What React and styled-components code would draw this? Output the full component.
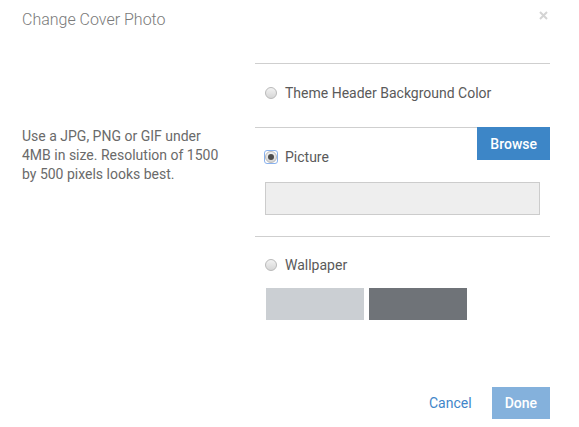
import React from "react";
import styled, { createGlobalStyle } from "styled-components";

const GlobalStyle = createGlobalStyle`
  body {
    margin: 0;
    background: #fff;
    font-family: Roboto, "Liberation Sans", sans-serif;
  }
`;

const Dialog = styled.div`
  width: 579px;
  height: 427px;
  box-sizing: border-box;
  padding: 0 29px 0 22px;
  background: #fff;
`;

const Header = styled.div`
  display: flex;
  justify-content: space-between;
  align-items: flex-start;
  height: 63px;
`;

const Title = styled.h1`
  margin: 10px 0 0;
  font-family: "Roboto Light", Roboto, "Liberation Sans", sans-serif;
  font-size: 16px;
  line-height: 20px;
  font-weight: 300;
  color: #7a7a7a;
`;

const Close = styled.button`
  margin: 11px 2px 0 0;
  padding: 0;
  border: 0;
  background: none;
  width: 9px;
  height: 9px;
  display: flex;
  cursor: pointer;
`;

const Body = styled.div`
  display: grid;
  grid-template-columns: 233px 1fr;
`;

const Hint = styled.p`
  margin: 0;
  padding-top: 64px;
  font-size: 14px;
  line-height: 19px;
  color: #6a6a6a;
  width: 210px;
`;

const Options = styled.div`
  display: flex;
  flex-direction: column;
`;

const Section = styled.div`
  border-top: 1px solid #cfcfcf;
  padding: ${(p) => p.$pad || "0"};
  padding-left: 10px;
  box-sizing: border-box;
  height: ${(p) => p.$height || "auto"};
`;

const TopRow = styled.div`
  display: flex;
  justify-content: space-between;
  align-items: flex-start;
`;

const Label = styled.label`
  display: flex;
  align-items: center;
  gap: 7px;
  height: 16px;
  margin-top: ${(p) => p.$top || "0"};
  font-size: 14px;
  color: #5a5a5a;
  cursor: pointer;
`;

const RadioWrap = styled.span`
  width: 14px;
  height: 14px;
  box-sizing: border-box;
  display: flex;
  align-items: center;
  justify-content: center;
  margin-left: -1px;
  border-radius: 3px;
  border: 1px solid ${(p) => (p.$focused ? "#8ab2ee" : "transparent")};
`;

const RadioDot = styled.span`
  width: 12px;
  height: 12px;
  box-sizing: border-box;
  border-radius: 50%;
  border: 1px solid #b9b9b9;
  background: linear-gradient(#f2f2f2, #d6d6d6);
  display: flex;
  align-items: center;
  justify-content: center;
  &::after {
    content: "";
    width: 6px;
    height: 6px;
    border-radius: 50%;
    background: #4d4d4d;
    display: ${(p) => (p.$checked ? "block" : "none")};
  }
`;

const Button = styled.button`
  border: 0;
  height: ${(p) => p.$h || "33px"};
  padding: 0 ${(p) => p.$px || "13px"};
  background: ${(p) => (p.$muted ? "#84b1dc" : "#3d86c7")};
  color: #fff;
  font-family: Roboto, "Liberation Sans", sans-serif;
  font-size: 14px;
  font-weight: 500;
  cursor: pointer;
  margin-top: ${(p) => p.$mt || "0"};
`;

const FileField = styled.div`
  margin-top: 17px;
  width: 275px;
  height: 33px;
  box-sizing: border-box;
  background: #eeeeee;
  border: 1px solid #cccccc;
`;

const Swatches = styled.div`
  display: flex;
  gap: 5px;
  margin: 15px 0 0 1px;
`;

const Swatch = styled.div`
  width: 98px;
  height: 32px;
  background: ${(p) => p.$color};
`;

const Footer = styled.div`
  display: flex;
  justify-content: flex-end;
  align-items: center;
  gap: 20px;
  margin-top: 67px;
`;

const LinkButton = styled.button`
  border: 0;
  padding: 0;
  background: none;
  font-family: Roboto, "Liberation Sans", sans-serif;
  font-size: 14px;
  color: #3f86c9;
  cursor: pointer;
`;

const Radio = ({ checked, focused }) => (
  <RadioWrap $focused={focused}>
    <RadioDot $checked={checked} />
  </RadioWrap>
);

export default function App() {
  return (
    <Dialog>
      <GlobalStyle />
      <Header>
        <Title>Change Cover Photo</Title>
        <Close aria-label="Close">
          <svg width="9" height="9" viewBox="0 0 9 9">
            <path d="M1 1L8 8M8 1L1 8" stroke="#d4d4d4" strokeWidth="2" />
          </svg>
        </Close>
      </Header>
      <Body>
        <Hint>
          Use a JPG, PNG or GIF under 4MB in size. Resolution of 1500 by 500
          pixels looks best.
        </Hint>
        <Options>
          <Section $height="64px" $pad="21px 0 0">
            <Label>
              <Radio />
              Theme Header Background Color
            </Label>
          </Section>
          <Section $pad="0 0 21px">
            <TopRow>
              <Label $top="21px">
                <Radio checked focused />
                Picture
              </Label>
              <Button $mt="-1px">Browse</Button>
            </TopRow>
            <FileField />
          </Section>
          <Section>
            <Label $top="20px">
              <Radio />
              Wallpaper
            </Label>
            <Swatches>
              <Swatch $color="#cbcfd3" />
              <Swatch $color="#6f7378" />
            </Swatches>
          </Section>
        </Options>
      </Body>
      <Footer>
        <LinkButton>Cancel</LinkButton>
        <Button $muted $h="32px" $px="13px">
          Done
        </Button>
      </Footer>
    </Dialog>
  );
}
